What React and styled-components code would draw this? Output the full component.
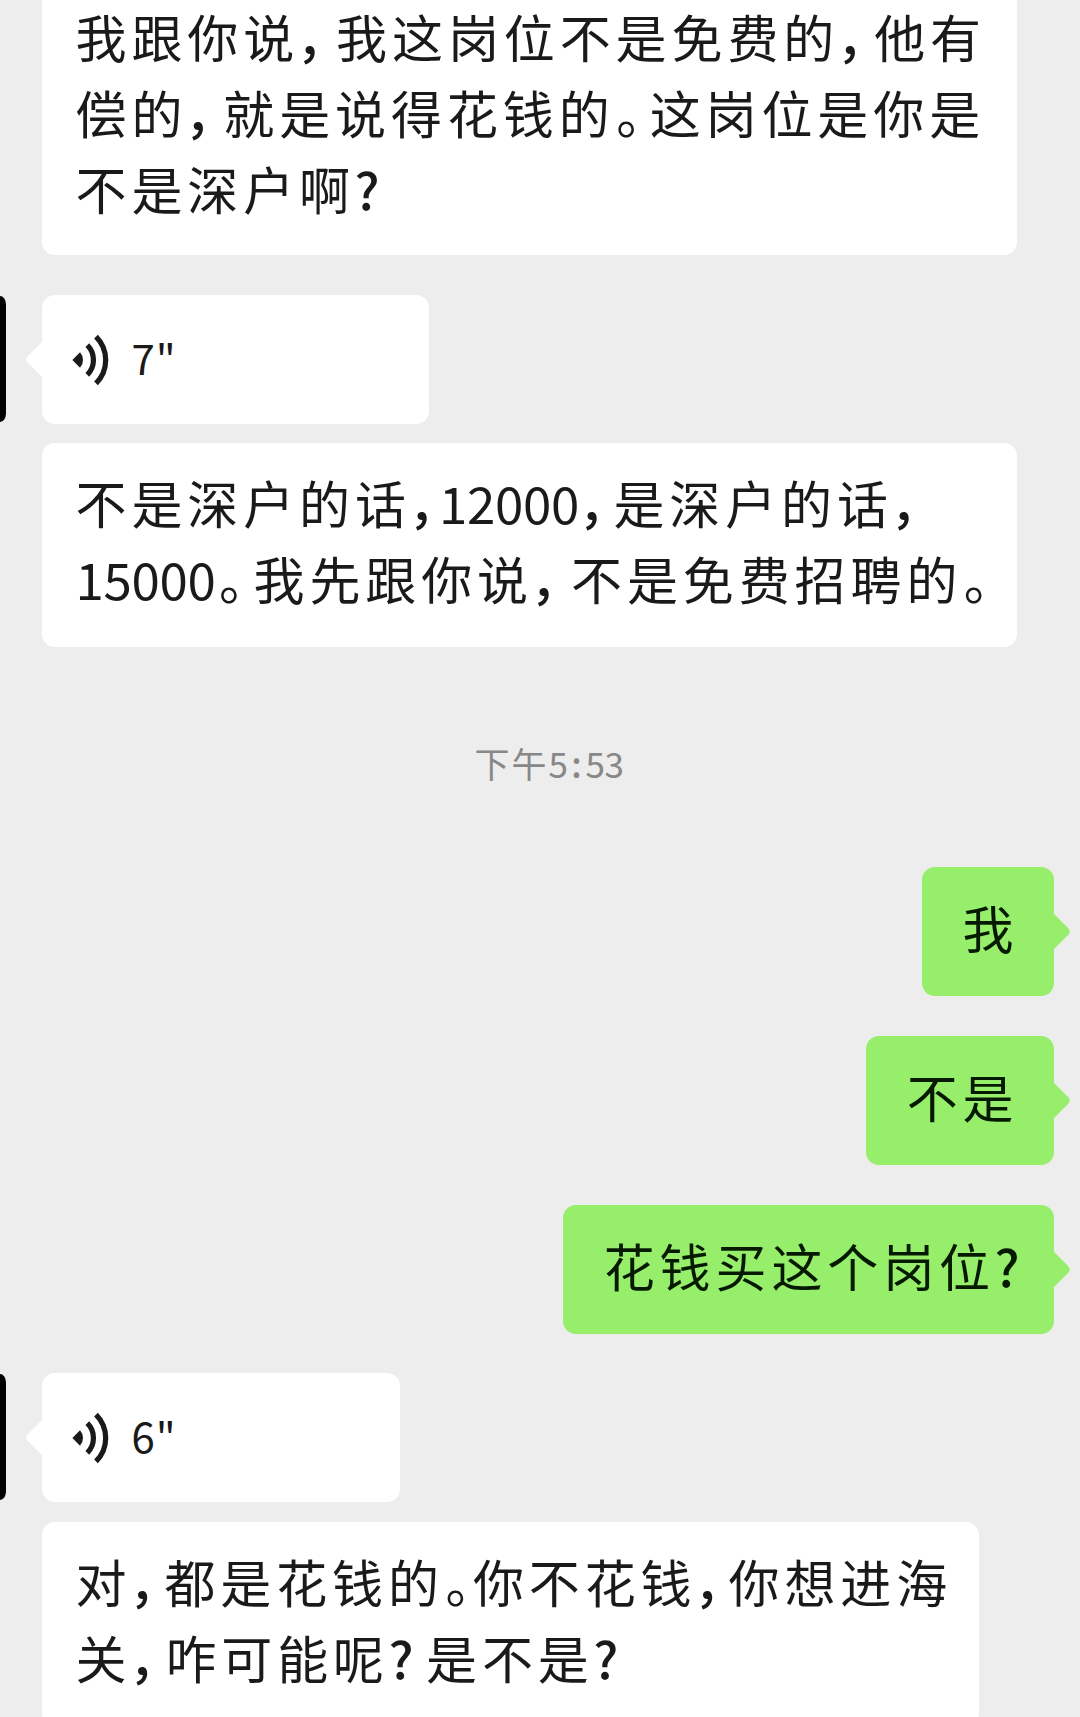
import React from "react";
import styled, { createGlobalStyle, css } from "styled-components";

const GlobalStyle = createGlobalStyle`
  * { box-sizing: border-box; }
  html, body { margin: 0; padding: 0; background: #ededed; }
  body { overflow: hidden; }
`;

const Screen = styled.main`
  width: 1080px;
  height: 1717px;
  overflow: hidden;
  background: #ededed;
  color: #1a1a1a;
  font-family: "Noto Sans CJK SC", "Noto Sans", sans-serif;
  display: flex;
  flex-direction: column;
`;

const Row = styled.div`
  display: flex;
  flex: none;
  align-items: flex-start;
  justify-content: ${(p) => (p.$own ? "flex-end" : "flex-start")};
  padding-left: ${(p) => (p.$own || p.$voice ? 0 : 41.5)}px;
  padding-right: ${(p) => (p.$own ? 26 : 0)}px;
  margin-top: ${(p) => p.$gap || 0}px;
`;

const Avatar = styled.div`
  flex: none;
  width: 6px;
  height: 126px;
  margin: 1px 35.5px 0 0;
  border-radius: 0 10px 10px 0 / 0 14px 14px 0;
  background: #000;
`;

const bubble = css`
  position: relative;
  flex: none;
  border-radius: 13px;
  background: #fff;
`;

const TextBubble = styled.div`
  ${bubble}
  width: ${(p) => p.$width}px;
  padding: ${(p) => (p.$cutTop ? 0 : 21)}px 0 31px 34px;
  ${(p) =>
    p.$cutTop &&
    "border-radius: 0 0 13px 13px; margin-top: -2.5px; padding-bottom: 29.5px;"}
`;

const OwnBubble = styled.div`
  ${bubble}
  height: 129px;
  padding: 22px 35.5px 0 41px;
  background: #96ee6b;
  color: #051a00;
`;

const VoiceBubble = styled.div`
  ${bubble}
  display: flex;
  align-items: center;
  width: ${(p) => p.$width}px;
  height: 129px;
  padding-left: 30px;
`;

const TailShape = styled.svg`
  position: absolute;
  top: 46px;
  width: 17px;
  height: 37px;
  ${(p) => (p.$own ? "right: -16px; transform: scaleX(-1);" : "left: -16px;")}
`;

const WaveIcon = styled.svg`
  flex: none;
  width: 38px;
  height: 54px;
`;

const Duration = styled.span`
  display: flex;
  margin: -5px 0 0 22px;
  font-size: 42px;
  line-height: 60px;
  letter-spacing: 1px;
`;

const Line = styled.div`
  height: 76px;
  line-height: 76px;
  font-size: 51px;
  letter-spacing: 4.9px;
  white-space: nowrap;
  display: flex;
`;

const Digits = styled.span`
  width: 142px;
  letter-spacing: -0.3px;
`;

const Mark = styled.span`
  flex: none;
  width: ${(p) => p.$width}px;
  letter-spacing: 0;
  text-indent: ${(p) => p.$indent || 0}px;
  font-weight: ${(p) => p.$weight || 400};
  font-feature-settings: "halt";
`;

const Time = styled.div`
  display: flex;
  justify-content: center;
  flex: none;
  height: 50px;
  margin: 90.5px 0 0 18px;
  color: #888;
  font-size: 35px;
  line-height: 50px;
  letter-spacing: 2px;
`;

const TimeDigits = styled.span`
  letter-spacing: -0.4px;
`;

const Colon = styled.span`
  width: 18px;
  text-align: center;
  letter-spacing: 0;
  font-weight: 500;
`;

const Tail = ({ own }) => (
  <TailShape $own={own} viewBox="0 0 17 37" aria-hidden="true">
    <path
      d="M17 0 L2 15 Q-1.4 18.5 2 22 L17 37 Z"
      fill={own ? "#96ee6b" : "#fff"}
    />
  </TailShape>
);

const Wave = () => (
  <WaveIcon viewBox="0 0 38 54" fill="none" aria-hidden="true">
    <path d="M0.4 27 L8 19.2 Q11 22.4 11 27 Q11 31.6 8 34.8 Z" fill="#1a1a1a" />
    <path d="M15.3 12.2 A20.9 20.9 0 0 1 15.3 41.8" stroke="#1a1a1a" strokeWidth="5.2" />
    <path d="M24 3.6 A33.1 33.1 0 0 1 24 50.4" stroke="#1a1a1a" strokeWidth="5.2" />
  </WaveIcon>
);

const indents = { "，": -2.5, "。": 1.5, "?": -0.5 };
const weights = { "，": 500, "?": 500 };

/* A line is a list of plain strings and [mark, width] pairs. */
const TextLine = ({ parts }) => (
  <Line>
    {parts.map((part, i) => {
      if (Array.isArray(part)) {
        const [mark, width] = part;
        return (
          <Mark key={i} $width={width} $indent={indents[mark]} $weight={weights[mark]}>
            {mark}
          </Mark>
        );
      }
      return /^\d+$/.test(part) ? (
        <Digits key={i}>{part}</Digits>
      ) : (
        <span key={i}>{part}</span>
      );
    })}
  </Line>
);

const Incoming = ({ lines, width, gap, cutTop }) => (
  <Row $gap={gap}>
    <TextBubble $width={width} $cutTop={cutTop}>
      {lines.map((parts, i) => (
        <TextLine key={i} parts={parts} />
      ))}
    </TextBubble>
  </Row>
);

const Voice = ({ seconds, width, gap }) => (
  <Row $voice $gap={gap}>
    <Avatar />
    <VoiceBubble $width={width}>
      <Tail />
      <Wave />
      <Duration>{seconds}"</Duration>
    </VoiceBubble>
  </Row>
);

const Outgoing = ({ parts, gap }) => (
  <Row $own $gap={gap}>
    <OwnBubble>
      <TextLine parts={parts} />
      <Tail own />
    </OwnBubble>
  </Row>
);

export default function App() {
  return (
    <>
      <GlobalStyle />
      <Screen>
        <Incoming
          cutTop
          width={975}
          lines={[
            ["我跟你说", ["，", 37], "我这岗位不是免费的", ["，", 35], "他有"],
            ["偿的", ["，", 36], "就是说得花钱的", ["。", 35], "这岗位是你是"],
            ["不是深户啊", ["?", 26]],
          ]}
        />
        <Voice seconds="7" width={387} gap={40} />
        <Incoming
          width={975}
          gap={19}
          lines={[
            ["不是深户的话", ["，", 28], "12000", ["，", 32.5], "是深户的话", ["，", 26]],
            ["15000", ["。", 36], "我先跟你说", ["，", 38], "不是免费招聘的", ["。", 30]],
          ]}
        />
        <Time>
          <span>下午</span>
          <TimeDigits>5</TimeDigits>
          <Colon>:</Colon>
          <TimeDigits>53</TimeDigits>
        </Time>
        <Outgoing parts={["我"]} gap={79.5} />
        <Outgoing parts={["不是"]} gap={40} />
        <Outgoing parts={["花钱买这个岗位", ["?", 23.5]]} gap={39.5} />
        <Voice seconds="6" width={358} gap={39.5} />
        <Incoming
          width={937.5}
          gap={20}
          lines={[
            ["对", ["，", 33], "都是花钱的", ["。", 29], "你不花钱", ["，", 32], "你想进海"],
            ["关", ["，", 34], "咋可能呢", ["?", 37], "是不是", ["?", 26]],
          ]}
        />
      </Screen>
    </>
  );
}
